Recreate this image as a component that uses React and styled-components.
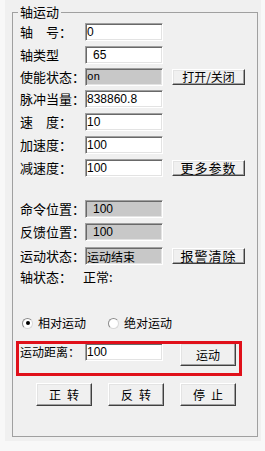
import React from "react";
import styled, { createGlobalStyle } from "styled-components";

const Global = createGlobalStyle`
  html, body { margin: 0; background: #f8f8f8; }
  body { font-family: "Noto Sans CJK SC", sans-serif; color: #000; }
`;

const Panel = styled.div`
  margin-left: 5px;
  width: 256px;
  height: 441px;
  padding-top: 4px;
  box-sizing: border-box;
  background: #f0f0f0;
  overflow: hidden;
`;

const Group = styled.fieldset`
  margin: 0 0 0 7px;
  width: 246px;
  min-width: 0;
  box-sizing: border-box;
  border: 1px solid #a0a0a0;
  padding: 0 0 30px 7px;
`;

const Legend = styled.legend`
  margin-left: -2px;
  padding: 0 2px;
  font-size: 13px;
  line-height: 16px;
`;

const Row = styled.div`
  display: flex;
  align-items: ${(p) => (p.$top ? "flex-start" : "center")};
  height: ${(p) => p.$h || 23}px;
  position: relative;
`;

const Spacer = styled.div`
  height: ${(p) => p.$h}px;
`;

const Label = styled.span`
  width: 65px;
  flex: none;
  font-size: ${(p) => (p.$small ? 12 : 13)}px;
  line-height: 16px;
  margin-top: ${(p) => (p.$small ? 1 : 0)}px;
  white-space: pre;
`;

const Field = styled.input.attrs({ readOnly: true })`
  width: 78px;
  height: 18px;
  flex: none;
  box-sizing: border-box;
  margin: 0;
  padding: 0 0 0 ${(p) => (p.$indent ? 7 : 1)}px;
  border: 1px solid;
  border-color: #a0a0a0 #ffffff #ffffff #a0a0a0;
  box-shadow: inset 1px 1px 0 #696969, inset -1px -1px 0 #e3e3e3;
  background: ${(p) => (p.$gray ? "#c8c8c8" : "#ffffff")};
  font-family: ${(p) =>
    p.$mono
      ? '"Liberation Mono", monospace'
      : '"Liberation Sans", "Noto Sans CJK SC", sans-serif'};
  font-size: ${(p) => (p.$mono ? 11 : 12)}px;
  color: #000;
  outline: none;
`;

const SideButton = styled.button`
  width: 73px;
  height: 16px;
  flex: none;
  margin: 0 0 0 9px;
  padding: 0;
  box-sizing: border-box;
  border: 1px solid;
  border-color: #ffffff #404040 #404040 #ffffff;
  box-shadow: inset -1px -1px 0 #a0a0a0, inset 1px 1px 0 #e3e3e3;
  background: #f0f0f0;
  font-family: "Noto Sans CJK SC", sans-serif;
  font-size: ${(p) => (p.$wide ? 13 : 12)}px;
  letter-spacing: ${(p) => (p.$wide ? 1 : 0)}px;
  line-height: 14px;
  color: #000;
`;

const PushButton = styled.button`
  width: 56px;
  height: 23px;
  flex: none;
  margin: 0 0 0 ${(p) => p.$ml || 0}px;
  padding: 0 0 0 ${(p) => (p.$spaced ? 6 : 0)}px;
  box-sizing: border-box;
  border: 1px solid;
  border-color: #ffffff #404040 #404040 #ffffff;
  box-shadow: inset -1px -1px 0 #a0a0a0, inset 1px 1px 0 #e3e3e3;
  background: #f0f0f0;
  font-family: "Noto Sans CJK SC", sans-serif;
  font-size: 12px;
  letter-spacing: ${(p) => (p.$spaced ? 6 : 0)}px;
  line-height: 16px;
  color: #000;
`;

const StatusText = styled.span`
  margin-left: -2px;
  font-size: 13px;
  line-height: 16px;
`;

const RadioRow = styled.div`
  display: flex;
  align-items: center;
  height: 18px;
  padding-left: 2px;
  gap: 22px;
`;

const RadioItem = styled.label`
  display: flex;
  align-items: center;
  gap: 5px;
  font-size: 12px;
  line-height: 16px;
`;

const RadioDot = styled.span`
  width: 11px;
  height: 11px;
  box-sizing: border-box;
  border-radius: 50%;
  border: 1px solid;
  border-color: #8a8a8a #d8d8d8 #d8d8d8 #8a8a8a;
  background: #ffffff;
  display: flex;
  align-items: center;
  justify-content: center;
  &::after {
    content: "";
    width: 4px;
    height: 4px;
    border-radius: 50%;
    background: ${(p) => (p.$checked ? "#000" : "transparent")};
  }
`;

const Highlight = styled.div`
  position: absolute;
  left: -4px;
  top: -2px;
  width: 226px;
  height: 35px;
  box-sizing: border-box;
  border: 3px solid #e0101a;
  pointer-events: none;
`;

const ActionRow = styled.div`
  display: flex;
  margin-top: 17px;
  padding-left: 16px;
  gap: 16px;
`;

export default function App() {
  return (
    <>
      <Global />
      <Panel>
        <Group>
          <Legend>轴运动</Legend>
          <Row $h={24}>
            <Label>轴　号：</Label>
            <Field value="0" />
          </Row>
          <Row $h={22}>
            <Label>轴类型</Label>
            <Field value="65" $indent />
          </Row>
          <Row $h={22}>
            <Label>使能状态：</Label>
            <Field value="on" $gray $mono />
            <SideButton>打开/关闭</SideButton>
          </Row>
          <Row $h={22}>
            <Label>脉冲当量：</Label>
            <Field value="838860.8" />
          </Row>
          <Row $h={24}>
            <Label>速　度：</Label>
            <Field value="10" />
          </Row>
          <Row $h={22}>
            <Label>加速度：</Label>
            <Field value="100" />
          </Row>
          <Row $h={24}>
            <Label>减速度：</Label>
            <Field value="100" />
            <SideButton $wide>更多参数</SideButton>
          </Row>
          <Spacer $h={18} />
          <Row $h={22}>
            <Label>命令位置：</Label>
            <Field value="100" $gray $indent />
          </Row>
          <Row $h={24}>
            <Label>反馈位置：</Label>
            <Field value="100" $gray $indent />
          </Row>
          <Row $h={24}>
            <Label>运动状态：</Label>
            <Field value="运动结束" $gray />
            <SideButton $wide>报警清除</SideButton>
          </Row>
          <Row $h={18}>
            <Label>轴状态：</Label>
            <StatusText>正常:</StatusText>
          </Row>
          <Spacer $h={28} />
          <RadioRow>
            <RadioItem>
              <RadioDot $checked />
              相对运动
            </RadioItem>
            <RadioItem>
              <RadioDot />
              绝对运动
            </RadioItem>
          </RadioRow>
          <Spacer $h={11} />
          <Row $h={23} $top>
            <Label $small>运动距离：</Label>
            <Field value="100" />
            <PushButton $ml={17}>运动</PushButton>
            <Highlight />
          </Row>
          <ActionRow>
            <PushButton $spaced>正转</PushButton>
            <PushButton $spaced>反转</PushButton>
            <PushButton $spaced>停止</PushButton>
          </ActionRow>
        </Group>
      </Panel>
    </>
  );
}
